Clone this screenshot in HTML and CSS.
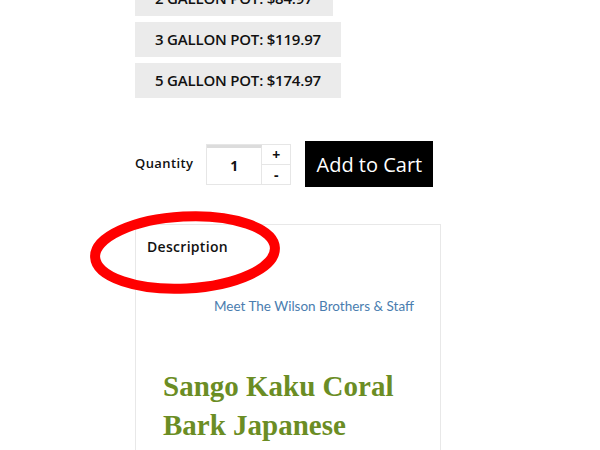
FILE: index.html
```html
<!DOCTYPE html>
<html>
<head>
<meta charset="utf-8">
<link rel="stylesheet" href="styles.css">
</head>
<body>
<div class="page">
  <div class="options">
    <div class="option">2 GALLON POT: $84.97</div>
    <div class="option">3 GALLON POT: $119.97</div>
    <div class="option">5 GALLON POT: $174.97</div>
  </div>
  <div class="buy-row">
    <span class="qty-label">Quantity</span>
    <div class="qty">
      <div class="qty-input">1</div>
      <div class="qty-steps">
        <div class="step">+</div>
        <div class="step">-</div>
      </div>
    </div>
    <div class="cart-btn">Add to Cart</div>
  </div>
  <div class="desc-box">
    <div class="desc-title">Description</div>
    <div class="meet"><a href="#">Meet The Wilson Brothers &amp; Staff</a></div>
    <h1 class="product-title">Sango Kaku Coral Bark Japanese</h1>
  </div>
  <svg class="circle" width="600" height="450" viewBox="0 0 600 450">
    <ellipse cx="185" cy="252.5" rx="90" ry="36" fill="none" stroke="#ff0000" stroke-width="10" transform="rotate(-3 185 252.5)"/>
  </svg>
</div>
</body>
</html>
```

FILE: styles.css
```css
html, body {
  margin: 0;
  padding: 0;
  background: #ffffff;
  overflow: hidden;
}
.page {
  position: relative;
  display: flow-root;
  width: 600px;
  height: 450px;
  padding-left: 135px;
  box-sizing: border-box;
  font-family: "Open Sans", "Noto Sans", sans-serif;
  color: #111;
}
.options {
  margin-top: -19px;
  display: flex;
  flex-direction: column;
  align-items: flex-start;
  gap: 6px;
}
.option {
  height: 35px;
  line-height: 35px;
  padding: 0 20px;
  background: #ebebeb;
  font-size: 15px;
  font-weight: 600;
  letter-spacing: -0.2px;
  color: #111;
  white-space: nowrap;
}
.buy-row {
  margin-top: 43px;
  display: flex;
  align-items: center;
}
.qty-label {
  font-size: 13px;
  font-weight: 600;
  letter-spacing: 0.4px;
  margin-right: 13px;
  margin-top: -3px;
}
.qty {
  display: flex;
  border: 1px solid #e6e6e6;
  margin-right: 14px;
}
.qty-input {
  width: 54px;
  height: 36px;
  border-top: 3px solid #dcdcdc;
  border-right: 1px solid #e6e6e6;
  display: flex;
  align-items: center;
  justify-content: center;
  font-size: 14px;
  font-weight: 700;
}
.qty-steps {
  width: 28px;
  display: flex;
  flex-direction: column;
}
.step {
  height: 19px;
  display: flex;
  align-items: center;
  justify-content: center;
  font-size: 14px;
  font-weight: 700;
}
.step + .step {
  height: 19px;
  border-top: 1px solid #e6e6e6;
}
.cart-btn {
  width: 128px;
  height: 46px;
  background: #000;
  color: #fff;
  font-size: 20px;
  display: flex;
  align-items: center;
  justify-content: center;
}
.desc-box {
  margin-top: 37px;
  width: 306px;
  box-sizing: border-box;
  border: 1px solid #e8e8e8;
  border-bottom: none;
  padding: 12px 0 0 11px;
  height: 240px;
}
.desc-title {
  font-size: 14px;
  font-weight: 600;
  letter-spacing: 0.3px;
  line-height: 20px;
}
.meet {
  margin-top: 39px;
  padding-left: 67px;
  font-family: "Lato", "Open Sans", sans-serif;
  font-size: 13.5px;
  line-height: 20px;
}
.meet a {
  color: #4a7daf;
  text-decoration: none;
}
.product-title {
  margin: 51px 0 0 16px;
  font-family: "Liberation Serif", Georgia, serif;
  font-size: 29px;
  font-weight: 700;
  line-height: 39px;
  color: #6b8d24;
  width: 270px;
}
.circle {
  position: absolute;
  left: 0;
  top: 0;
  pointer-events: none;
}
```
